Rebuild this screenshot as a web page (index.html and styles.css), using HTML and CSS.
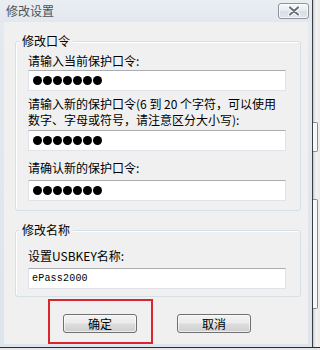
FILE: index.html
```html
<!DOCTYPE html>
<html lang="zh-CN">
<head>
<meta charset="utf-8">
<title>修改设置</title>
<link rel="stylesheet" href="styles.css">
</head>
<body>
<div class="screen">
  <div class="window">
    <div class="titlebar">
      <span class="title">修改设置</span>
      <button class="close" aria-label="关闭">
        <svg width="14" height="10" viewBox="0 0 14 10">
          <path d="M3 1.5 L11 8.5 M11 1.5 L3 8.5" stroke="#ffffff" stroke-width="4.2" stroke-linecap="round"/>
          <path d="M3 1.5 L11 8.5 M11 1.5 L3 8.5" stroke="#6b727c" stroke-width="2.2" stroke-linecap="round"/>
        </svg>
      </button>
    </div>
    <div class="client">
      <div class="group g1">
        <span class="legend">修改口令</span>
        <div class="lbl l1">请输入当前保护口令:</div>
        <div class="field f1"><span class="dot"></span><span class="dot"></span><span class="dot"></span><span class="dot"></span><span class="dot"></span><span class="dot"></span><span class="dot"></span></div>
        <div class="lbl l2">请输入新的保护口令(6 到 20 个字符，可以使用<br>数字、字母或符号，请注意区分大小写):</div>
        <div class="field f2"><span class="dot"></span><span class="dot"></span><span class="dot"></span><span class="dot"></span><span class="dot"></span><span class="dot"></span><span class="dot"></span></div>
        <div class="lbl l3">请确认新的保护口令:</div>
        <div class="field f3"><span class="dot"></span><span class="dot"></span><span class="dot"></span><span class="dot"></span><span class="dot"></span><span class="dot"></span><span class="dot"></span></div>
      </div>
      <div class="group g2">
        <span class="legend">修改名称</span>
        <div class="lbl l4">设置USBKEY名称:</div>
        <div class="field f4"><span class="value">ePass2000</span></div>
      </div>
      <div class="buttons">
        <div class="btn-wrap">
          <button class="btn">确定</button>
          <span class="highlight"></span>
        </div>
        <button class="btn cancel">取消</button>
      </div>
    </div>
  </div>
  <div class="side">
    <div class="side-item s1"></div>
    <div class="side-item s2"></div>
  </div>
</div>
</body>
</html>
```

FILE: styles.css
```css
* { box-sizing: border-box; }

html, body {
  margin: 0;
  padding: 0;
}

body {
  width: 320px;
  height: 350px;
  overflow: hidden;
  background: #e6e6e6;
  font-family: "Noto Sans CJK SC", "Noto Sans", sans-serif;
  font-size: 12px;
  color: #000;
}

.screen {
  display: flex;
  height: 348px;
  border-bottom: 1px solid #2b2b2b;
}

.window {
  width: 313px;
  display: flex;
  flex-direction: column;
  border-right: 1px solid #3a3d42;
  background: linear-gradient(180deg, #e4eaf0 0%, #dde4ec 100%);
}

.titlebar {
  height: 22px;
  display: flex;
  align-items: flex-start;
  justify-content: space-between;
  background: linear-gradient(180deg, #e9eef3 0%, #e2e8ee 100%);
}

.title {
  padding-left: 6px;
  line-height: 22px;
  font-size: 12px;
  color: #505356;
}

.close {
  margin: 3px 3px 0 0;
  width: 31px;
  height: 16px;
  padding: 0;
  border: 1px solid #8c939c;
  border-radius: 3px;
  background: linear-gradient(180deg, #f6f8fa 0%, #e8ecf0 45%, #d9dee4 55%, #e1e6eb 100%);
  box-shadow: inset 0 0 0 1px rgba(255, 255, 255, 0.7);
  display: flex;
  align-items: center;
  justify-content: center;
}

.client {
  flex: 1;
  margin: 0 4px 3px 4px;
  background: #f0f0f0;
  padding-left: 11px;
  display: flex;
  flex-direction: column;
}

.group {
  width: 286px;
  border: 1px solid #d5dfe5;
  border-radius: 3px;
  box-shadow: inset 1px 1px 0 #ffffff;
  display: flex;
  flex-direction: column;
  padding: 0 14px 9px 12px;
}

.g1 { margin-top: 19px; }
.g2 { margin-top: 19px; padding-bottom: 7px; }

.legend {
  align-self: flex-start;
  margin: -9px 0 0 -9px;
  padding: 0 3px;
  line-height: 16px;
  background: #f0f0f0;
  color: #000;
}

.lbl {
  white-space: nowrap;
  line-height: 16px;
}

.l1 { margin-top: 4px; }
.l2 { margin-top: 5px; line-height: 16px; }
.l3 { margin-top: 9px; }
.l4 { margin-top: 10px; }

.field {
  height: 21px;
  background: #ffffff;
  border: 1px solid #e2e3ea;
  border-top-color: #abadb3;
  display: flex;
  align-items: center;
  gap: 1px;
  padding-left: 4px;
}

.f1 { margin-top: 1px; }
.f2 { margin-top: 2px; }
.f3 { margin-top: 4px; }
.f4 { margin-top: 4px; padding-left: 3px; }

.dot {
  width: 9px;
  height: 9px;
  border-radius: 50%;
  background: #000;
}

.value {
  font-family: "Liberation Mono", "DejaVu Sans Mono", monospace;
  font-size: 10px;
  letter-spacing: 0.2px;
  color: #000;
}

.buttons {
  display: flex;
  gap: 40px;
  margin: 17px 0 0 48px;
  align-items: flex-start;
}

.btn-wrap {
  position: relative;
}

.btn {
  width: 74px;
  height: 19px;
  padding: 0;
  border: 1px solid #707070;
  border-radius: 3px;
  background: linear-gradient(180deg, #f2f2f2 0%, #ebebeb 48%, #dddddd 52%, #cfcfcf 100%);
  box-shadow: inset 0 0 0 1px rgba(255, 255, 255, 0.6);
  font-family: "Noto Sans CJK SC", "Noto Sans", sans-serif;
  font-size: 12px;
  line-height: 16px;
  color: #000;
}

.highlight {
  position: absolute;
  left: -15px;
  top: -15px;
  width: 105px;
  height: 45px;
  border: 2px solid #d9262e;
  pointer-events: none;
}

.side {
  flex: 1;
  background: linear-gradient(90deg, #c9c9c9 0%, #f3f3f3 40%, #eaeaea 100%);
  display: flex;
  flex-direction: column;
}

.side-item {
  width: 5px;
  border: 1px solid #8c8c8c;
  border-left: none;
  border-radius: 0 2px 2px 0;
  background: #f7f7f7;
}

.s1 { margin-top: 122px; height: 30px; }
.s2 { margin-top: 47px; height: 110px; }
```
